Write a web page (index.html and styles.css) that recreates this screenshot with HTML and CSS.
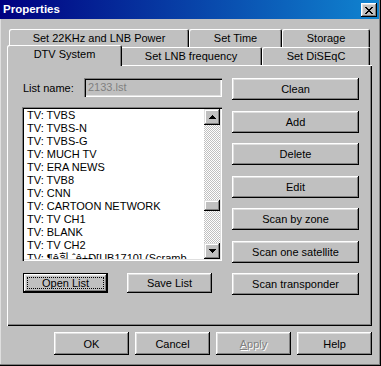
FILE: index.html
```html
<!DOCTYPE html>
<html>
<head>
<meta charset="utf-8">
<title>Properties</title>
<link rel="stylesheet" href="styles.css">
</head>
<body>
<div class="window">
  <div class="titlebar">
    <span class="title">Properties</span>
    <div class="close">
      <svg width="8" height="7" viewBox="0 0 8 7" shape-rendering="crispEdges">
        <rect x="0" y="0" width="2" height="1"/><rect x="6" y="0" width="2" height="1"/>
        <rect x="1" y="1" width="2" height="1"/><rect x="5" y="1" width="2" height="1"/>
        <rect x="2" y="2" width="4" height="1"/>
        <rect x="3" y="3" width="2" height="1"/>
        <rect x="2" y="4" width="4" height="1"/>
        <rect x="1" y="5" width="2" height="1"/><rect x="5" y="5" width="2" height="1"/>
        <rect x="0" y="6" width="2" height="1"/><rect x="6" y="6" width="2" height="1"/>
      </svg>
    </div>
  </div>
  <div class="content">
    <div class="tabs">
      <div class="tabrow">
        <div class="tab t-22">Set 22KHz and LNB Power</div>
        <div class="tab t-time">Set Time</div>
        <div class="tab t-store">Storage</div>
      </div>
      <div class="tabrow">
        <div class="tab t-dtv active">DTV System</div>
        <div class="tab t-lnb">Set LNB frequency</div>
        <div class="tab t-diseqc">Set DiSEqC</div>
      </div>
    </div>
    <div class="panel">
      <div class="leftcol">
        <div class="namerow">
          <span class="label">List name:</span>
          <div class="field">2133.lst</div>
        </div>
        <div class="listbox">
          <ul class="items">
            <li>TV: TVBS</li>
            <li>TV: TVBS-N</li>
            <li>TV: TVBS-G</li>
            <li>TV: MUCH TV</li>
            <li>TV: ERA NEWS</li>
            <li>TV: TVB8</li>
            <li>TV: CNN</li>
            <li>TV: CARTOON NETWORK</li>
            <li>TV: TV CH1</li>
            <li>TV: BLANK</li>
            <li>TV: TV CH2</li>
            <li>TV: ¶ê휘 ˆê+Ð[UB1710] (Scramb</li>
          </ul>
          <div class="scrollbar">
            <div class="sbtn">
              <svg width="7" height="4" viewBox="0 0 7 4" shape-rendering="crispEdges">
                <rect x="3" y="0" width="1" height="1"/><rect x="2" y="1" width="3" height="1"/>
                <rect x="1" y="2" width="5" height="1"/><rect x="0" y="3" width="7" height="1"/>
              </svg>
            </div>
            <div class="track"><div class="thumb"></div></div>
            <div class="sbtn">
              <svg width="7" height="4" viewBox="0 0 7 4" shape-rendering="crispEdges">
                <rect x="0" y="0" width="7" height="1"/><rect x="1" y="1" width="5" height="1"/>
                <rect x="2" y="2" width="3" height="1"/><rect x="3" y="3" width="1" height="1"/>
              </svg>
            </div>
          </div>
        </div>
        <div class="listbtns">
          <div class="btn small default"><span class="focus">Open List</span></div>
          <div class="btn small">Save List</div>
        </div>
      </div>
      <div class="rightcol">
        <div class="btn wide">Clean</div>
        <div class="btn wide">Add</div>
        <div class="btn wide">Delete</div>
        <div class="btn wide">Edit</div>
        <div class="btn wide">Scan by zone</div>
        <div class="btn wide">Scan one satellite</div>
        <div class="btn wide">Scan transponder</div>
      </div>
    </div>
    <div class="footer">
      <div class="btn foot">OK</div>
      <div class="btn foot">Cancel</div>
      <div class="btn foot disabled"><span><u>A</u>pply</span></div>
      <div class="btn foot">Help</div>
    </div>
  </div>
</div>
</body>
</html>
```

FILE: styles.css
```css
* { box-sizing: border-box; }
html, body { margin: 0; padding: 0; }
body {
  background: #c0c0c0;
  font-family: "Liberation Sans", Arial, "Noto Sans CJK KR", sans-serif;
  font-size: 11px;
  color: #000;
}
.window {
  width: 381px;
  height: 366px;
  background: #c0c0c0;
  padding: 0 2px 2px 0;
  box-shadow: inset -1px -1px #000, inset -2px -2px #808080, inset 1px 0 #dfdfdf;
  display: flex;
  flex-direction: column;
}
.titlebar {
  height: 19px;
  flex: none;
  background: linear-gradient(to right, #000080, #1084d0);
  display: flex;
  align-items: flex-start;
  justify-content: space-between;
  padding: 0 2px 0 3px;
}
.title {
  color: #fff;
  font-weight: bold;
  font-size: 11.5px;
  line-height: 19px;
}
.close {
  margin-top: 3px;
  width: 16px;
  height: 14px;
  background: #c0c0c0;
  box-shadow: inset -1px -1px #000, inset 1px 1px #fff, inset -2px -2px #808080, inset 2px 2px #dfdfdf;
  display: flex;
  align-items: center;
  justify-content: center;
}
.close svg { display: block; fill: #000; margin-left: -1px; }

.content {
  padding: 0 7px 0 7px;
  display: flex;
  flex-direction: column;
}
.tabs { margin-top: 10px; padding-left: 2px; }
.tabrow { display: flex; height: 18px; align-items: flex-start; }
.tab {
  height: 18px;
  line-height: 17px;
  padding-top: 1px;
  text-align: center;
  white-space: nowrap;
  background: #c0c0c0;
  border-radius: 2px 2px 0 0;
  box-shadow: inset 1px 1px #fff, inset -1px 0 #000, inset -2px 0 #808080;
}
.t-22 { width: 180px; }
.t-time { width: 93px; }
.t-store { width: 88px; }
.t-dtv { width: 111px; }
.t-lnb { width: 142px; }
.t-diseqc { width: 108px; }
.tab.active {
  position: relative;
  z-index: 1;
  width: 115px;
  height: 21px;
  margin: -2px -2px -1px -2px;
  line-height: 18px;
  padding-top: 0;
}

.panel {
  height: 261px;
  flex: none;
  display: flex;
  gap: 10px;
  padding: 13px 0 0 15px;
  box-shadow: inset 1px 1px #fff, inset -1px -1px #000, inset -2px -2px #808080;
}
.leftcol { width: 200px; display: flex; flex-direction: column; }
.namerow { height: 19px; display: flex; align-items: center; }
.label { width: 62px; padding-left: 1px; }
.field {
  width: 138px;
  height: 19px;
  line-height: 18px;
  padding-left: 4px;
  color: #808080;
  background: #c0c0c0;
  box-shadow: inset 1px 1px #808080, inset 2px 2px #000, inset -1px -1px #fff, inset -2px -2px #dfdfdf;
}
.listbox {
  margin-top: 10px;
  height: 154px;
  display: flex;
  padding: 2px;
  background: #fff;
  box-shadow: inset 1px 1px #808080, inset 2px 2px #000, inset -1px -1px #fff, inset -2px -2px #dfdfdf;
}
.items {
  list-style: none;
  margin: 0;
  padding: 0 0 0 3px;
  flex: 1;
  overflow: hidden;
}
.items li { height: 13px; line-height: 13px; white-space: nowrap; }
.scrollbar { width: 16px; display: flex; flex-direction: column; }
.sbtn {
  height: 16px;
  flex: none;
  background: #c0c0c0;
  box-shadow: inset -1px -1px #000, inset 1px 1px #dfdfdf, inset -2px -2px #808080, inset 2px 2px #fff;
  display: flex;
  align-items: center;
  justify-content: center;
}
.sbtn svg { display: block; fill: #000; }
.track {
  flex: 1;
  background: repeating-conic-gradient(#c0c0c0 0 25%, #fff 0 50%) 0 0 / 2px 2px;
}
.thumb {
  margin-top: 75px;
  height: 11px;
  background: #c0c0c0;
  box-shadow: inset -1px -1px #000, inset 1px 1px #dfdfdf, inset -2px -2px #808080, inset 2px 2px #fff;
}
.listbtns { margin-top: 12px; display: flex; gap: 19px; padding-left: 1px; }

.btn {
  background: #c0c0c0;
  box-shadow: inset -1px -1px #000, inset 1px 1px #fff, inset -2px -2px #808080, inset 2px 2px #dfdfdf;
  display: flex;
  align-items: center;
  justify-content: center;
  white-space: nowrap;
}
.btn.small { width: 85px; height: 20px; }
.btn.default {
  border: 1px solid #000;
  padding: 3px;
}
.btn.default .focus {
  flex: 1;
  align-self: stretch;
  border: 1px dotted #000;
  display: flex;
  align-items: center;
  justify-content: center;
}
.rightcol { width: 127px; display: flex; flex-direction: column; }
.btn.wide { height: 22px; }
.btn.wide:nth-child(even) { margin-top: 11px; }
.btn.wide:nth-child(odd) + .btn.wide:nth-child(odd) { margin-top: 10px; }
.rightcol .btn.wide:nth-child(3),
.rightcol .btn.wide:nth-child(5),
.rightcol .btn.wide:nth-child(7) { margin-top: 10px; }

.footer {
  margin-top: 6px;
  display: flex;
  justify-content: flex-end;
  gap: 6px;
}
.btn.foot { width: 75px; height: 23px; }
.btn.disabled { color: #808080; text-shadow: 1px 1px #fff; }
```
